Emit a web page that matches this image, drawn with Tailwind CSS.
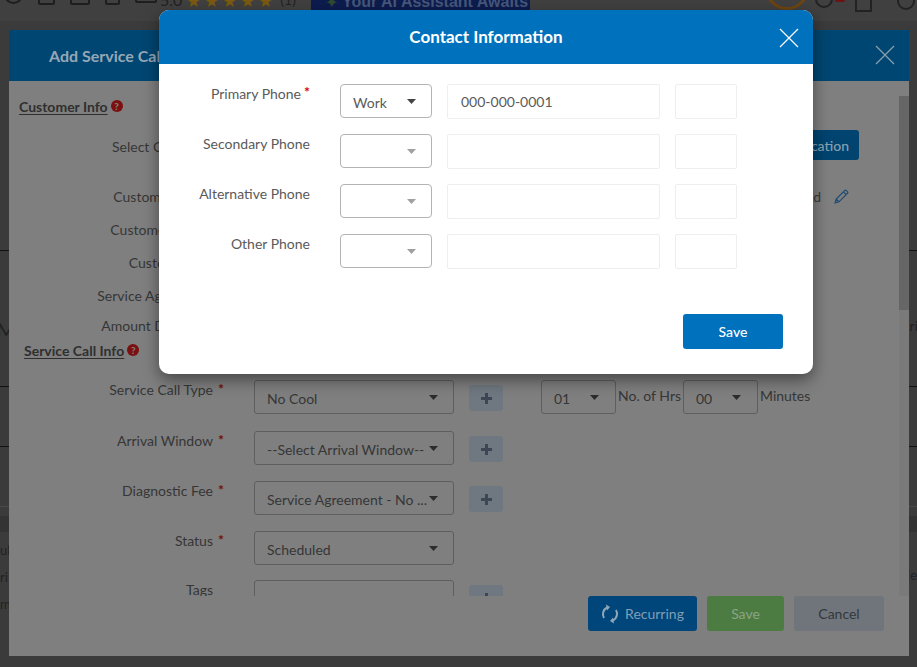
<!DOCTYPE html>
<html lang="en">
  <head>
    <meta charset="UTF-8" />
    <title>Add Service Call - Contact Information</title>
    <script src="https://cdn.jsdelivr.net/npm/@tailwindcss/browser@4"></script>
  </head>
  <body class="bg-[#3e3e3e] font-['Lato','Open_Sans',sans-serif] text-[14px] overflow-hidden">
    <div class="relative w-[917px] h-[667px] overflow-hidden">
      <!-- page behind the dialogs -->
      <div class="flex flex-col h-full text-[#222]">
        <div class="flex items-start h-[21px] bg-[#404040] overflow-hidden shrink-0">
          <div class="flex items-start gap-[15px] pl-[4px] w-[158px]">
            <div class="w-[19px] h-[20px] -mt-[16px] border-2 border-[#1e1e1e] rounded-full"></div>
            <div class="w-[17px] h-[20px] -mt-[15px] border-2 border-[#1e1e1e] rounded-[2px]"></div>
            <div class="w-[20px] h-[20px] -mt-[15px] border-2 border-[#1e1e1e] rounded-[2px]"></div>
            <div class="w-[15px] h-[20px] -mt-[15px] border-2 border-[#1e1e1e] rounded-[2px]"></div>
            <div class="w-[22px] h-[20px] -mt-[17px] border-2 border-[#1e1e1e] rounded-[2px]"></div>
          </div>
          <span class="ml-[2px] -mt-[10px] text-[16px] leading-[20px] text-[#222]">5.0</span>
          <span class="ml-[4px] -mt-[9px] text-[17px] leading-[20px] tracking-[3px] text-[#7a5a10]">★★★★★</span>
          <span class="ml-[4px] -mt-[10px] text-[14px] leading-[20px] text-[#222]">(1)</span>
          <div class="flex items-start ml-[15px] w-[219px] h-[10px] bg-[#0c1c4e] overflow-hidden">
            <span class="ml-[14px] -mt-[8px] text-[16px] leading-[20px] text-[#2f4a2f]">✦</span>
            <span class="ml-[4px] -mt-[8px] font-['Liberation_Sans',sans-serif] font-bold text-[16px] leading-[20px] text-[#46577a] whitespace-nowrap">Your AI Assistant Awaits</span>
          </div>
          <div class="ml-[235px] -mt-[34px] w-[44px] h-[44px] shrink-0 rounded-full border-[3px] border-[#6e4410]"></div>
          <div class="ml-[6px] -mt-[10px] w-[18px] h-[18px] shrink-0 border-2 border-[#222] rounded-full"></div>
          <div class="ml-[2px] -mt-[2px] w-[10px] h-[4px] shrink-0 rounded-full bg-[#6a1414]"></div>
          <div class="ml-[10px] -mt-[8px] w-[17px] h-[20px] shrink-0 border-2 border-[#222]"></div>
          <div class="ml-[25px] -mt-[10px] w-[18px] h-[20px] shrink-0 border-2 border-[#222] rounded-full"></div>
        </div>
        <div class="flex-1 flex flex-col bg-[#3b3b3b]">
          <div class="h-[230px] border-b border-[#111] shrink-0"></div>
          <div class="flex justify-between h-[136px] border-b border-[#111] shrink-0">
            <span class="mt-[66px] -ml-[4px] text-[22px] leading-[26px]">M</span>
            <span class="mt-[66px] text-[14px] leading-[18px] -mr-[1px] pr-0">ri</span>
          </div>
          <div class="h-[60px] border-b border-[#111] shrink-0"></div>
          <div class="h-[60px] border-b border-[#4a4a4a] shrink-0"></div>
          <div class="h-[9px] shrink-0"></div>
          <div class="h-[16px] bg-[#333] shrink-0"></div>
          <div class="flex justify-between">
            <div class="flex flex-col gap-[9px] mt-[9px] text-[13px] leading-[18px]">
              <span class="w-[9px]">ul</span>
              <span class="w-[9px]">ri</span>
              <span class="w-[9px]">m</span>
            </div>
            <span class="mt-[34px] text-[13px] leading-[18px]">le</span>
          </div>
        </div>
      </div>

      <!-- Add Service Call dialog, dimmed by the one on top -->
      <div class="absolute left-[9px] top-[30px] w-[900px] h-[626px] bg-[#7f7f7f] flex flex-col">
        <div class="relative flex items-center h-[51px] pl-[40px] bg-[#004672] shrink-0">
          <h2 class="text-[16px] font-bold text-[#96a7b5]">Add Service Call</h2>
          <svg class="absolute right-[14px] top-[15px] w-[20px] h-[20px]" viewBox="0 0 20 20" fill="none" stroke="#8aa0ae" stroke-width="1.2"><path d="M1 1 19 19M19 1 1 19" /></svg>
        </div>
        <div class="flex mt-[15px] h-[500px] shrink-0">
          <div class="relative flex-1 overflow-hidden text-[#363636]">
            <div class="flex items-center gap-[3px] pl-[10px] h-[20px] font-bold text-[#2f2f2f]">
              <span class="underline underline-offset-2">Customer Info</span>
              <span class="flex items-center justify-center w-[12px] h-[12px] rounded-full bg-[#7c0f0f] text-[10px] leading-none font-black text-[#7f7f7f]">?</span>
            </div>
            <div class="flex mt-[20px] h-[20px] items-center">
              <span class="w-[204px] text-right">Select Customer</span>
              <div class="flex flex-1 justify-end pr-[40px]">
                <span class="relative -top-[1px] flex items-center justify-end w-[180px] h-[30px] pr-[10px] rounded-[3px] bg-[#00446f] text-[#8aa0ae] font-medium">Add New Location</span>
              </div>
            </div>
            <div class="flex mt-[30px] h-[20px] items-center">
              <span class="w-[204px] text-right">Customer Name</span>
              <div class="flex flex-1 items-center justify-end pr-[50px] gap-[13px]">
                <span class="text-[#3a3a3a]">Oak Rd</span>
                <svg class="w-[15px] h-[15px]" viewBox="0 0 15 15" fill="none" stroke="#1c4a70" stroke-width="1.2"><path d="M1.2 13.8 2.2 10 10.6 1.6a1.3 1.3 0 0 1 1.8 0l1 1a1.3 1.3 0 0 1 0 1.8L5 12.8ZM2.2 10 5 12.8M9.4 2.8l2.8 2.8" /></svg>
              </div>
            </div>
            <div class="flex mt-[13px] h-[20px] items-center"><span class="w-[204px] text-right">Customer Phone</span></div>
            <div class="flex mt-[13px] h-[20px] items-center"><span class="w-[204px] text-right">Customer Fax</span></div>
            <div class="flex mt-[13px] h-[20px] items-center"><span class="w-[204px] text-right">Service Agreement</span></div>
            <div class="flex mt-[10px] h-[20px] items-center"><span class="w-[204px] text-right">Amount Due Now</span></div>
            <div class="flex items-center gap-[3px] pl-[15px] mt-[5px] h-[20px] font-bold text-[#2f2f2f]">
              <span class="underline underline-offset-2">Service Call Info</span>
              <span class="flex items-center justify-center w-[12px] h-[12px] rounded-full bg-[#7c0f0f] text-[10px] leading-none font-black text-[#7f7f7f]">?</span>
            </div>
            <div class="flex items-start mt-[20px] h-[34px]">
              <span class="w-[204px] text-right leading-[20px]">Service Call Type</span>
              <span class="w-[41px] pl-[5px] text-[#6d0f0f] font-bold leading-[18px]">*</span>
              <div class="flex items-center justify-between w-[200px] h-[34px] px-[12px] border border-[#5e5e5e] rounded-[3px]">
                <span class="pt-[2px]">No Cool</span>
                <svg class="w-[9px] h-[5px] mr-[3px]" viewBox="0 0 9 5" fill="#2c2c2c"><path d="M0 0h9L4.5 5Z" /></svg>
              </div>
              <div class="flex items-center justify-center w-[34px] h-[26px] ml-[15px] mt-[5px] rounded-[3px] bg-[#6f7880]">
                <svg class="w-[11px] h-[11px]" viewBox="0 0 11 11" fill="#3c4753"><path d="M4 0h3v4h4v3H7v4H4V7H0V4h4Z" /></svg>
              </div>
              <div class="flex items-center justify-between w-[75px] h-[34px] ml-[38px] pl-[12px] pr-[16px] border border-[#5e5e5e] rounded-[3px]">
                <span class="pt-[2px]">01</span>
                <svg class="w-[9px] h-[5px]" viewBox="0 0 9 5" fill="#2c2c2c"><path d="M0 0h9L4.5 5Z" /></svg>
              </div>
              <span class="w-[67px] pl-[2px] leading-[32px] whitespace-nowrap">No. of Hrs</span>
              <div class="flex items-center justify-between w-[75px] h-[34px] pl-[12px] pr-[16px] border border-[#5e5e5e] rounded-[3px]">
                <span class="pt-[2px]">00</span>
                <svg class="w-[9px] h-[5px]" viewBox="0 0 9 5" fill="#2c2c2c"><path d="M0 0h9L4.5 5Z" /></svg>
              </div>
              <span class="pl-[2px] leading-[32px]">Minutes</span>
            </div>
            <div class="flex items-start mt-[17px] h-[34px]">
              <span class="w-[204px] text-right leading-[20px]">Arrival Window</span>
              <span class="w-[41px] pl-[5px] text-[#6d0f0f] font-bold leading-[18px]">*</span>
              <div class="flex items-center justify-between w-[200px] h-[34px] px-[12px] border border-[#5e5e5e] rounded-[3px]">
                <span class="pt-[2px] whitespace-nowrap">--Select Arrival Window--</span>
                <svg class="w-[9px] h-[5px] mr-[3px]" viewBox="0 0 9 5" fill="#2c2c2c"><path d="M0 0h9L4.5 5Z" /></svg>
              </div>
              <div class="flex items-center justify-center w-[34px] h-[26px] ml-[15px] mt-[5px] rounded-[3px] bg-[#6f7880]">
                <svg class="w-[11px] h-[11px]" viewBox="0 0 11 11" fill="#3c4753"><path d="M4 0h3v4h4v3H7v4H4V7H0V4h4Z" /></svg>
              </div>
            </div>
            <div class="flex items-start mt-[16px] h-[34px]">
              <span class="w-[204px] text-right leading-[20px]">Diagnostic Fee</span>
              <span class="w-[41px] pl-[5px] text-[#6d0f0f] font-bold leading-[18px]">*</span>
              <div class="flex items-center justify-between w-[200px] h-[34px] px-[12px] border border-[#5e5e5e] rounded-[3px]">
                <span class="pt-[2px] whitespace-nowrap">Service Agreement - No ...</span>
                <svg class="w-[9px] h-[5px] mr-[3px] shrink-0" viewBox="0 0 9 5" fill="#2c2c2c"><path d="M0 0h9L4.5 5Z" /></svg>
              </div>
              <div class="flex items-center justify-center w-[34px] h-[26px] ml-[15px] mt-[5px] rounded-[3px] bg-[#6f7880]">
                <svg class="w-[11px] h-[11px]" viewBox="0 0 11 11" fill="#3c4753"><path d="M4 0h3v4h4v3H7v4H4V7H0V4h4Z" /></svg>
              </div>
            </div>
            <div class="flex items-start mt-[16px] h-[34px]">
              <span class="w-[204px] text-right leading-[20px]">Status</span>
              <span class="w-[41px] pl-[5px] text-[#6d0f0f] font-bold leading-[18px]">*</span>
              <div class="flex items-center justify-between w-[200px] h-[34px] px-[12px] border border-[#5e5e5e] rounded-[3px]">
                <span class="pt-[2px]">Scheduled</span>
                <svg class="w-[9px] h-[5px] mr-[3px]" viewBox="0 0 9 5" fill="#2c2c2c"><path d="M0 0h9L4.5 5Z" /></svg>
              </div>
            </div>
            <div class="flex items-start mt-[15px] h-[34px]">
              <span class="w-[204px] text-right leading-[20px]">Tags</span>
              <span class="w-[41px]"></span>
              <div class="w-[200px] h-[34px] border border-[#5e5e5e] rounded-[3px]"></div>
              <div class="flex items-center justify-center w-[34px] h-[26px] ml-[15px] mt-[5px] rounded-[3px] bg-[#6f7880]">
                <svg class="w-[11px] h-[11px]" viewBox="0 0 11 11" fill="#3c4753"><path d="M4 0h3v4h4v3H7v4H4V7H0V4h4Z" /></svg>
              </div>
            </div>
          </div>
          <div class="w-[10px] h-full bg-[#7a7a7a] shrink-0">
            <div class="h-[214px] bg-[#666666]"></div>
          </div>
        </div>
        <div class="flex justify-end gap-[10px] pr-[25px]">
          <button class="flex items-center justify-center gap-[6px] w-[109px] h-[35px] rounded-[3px] bg-[#00467a] text-[#7f9fb5]">
            <svg class="w-[18px] h-[20px]" viewBox="0 0 18 20" fill="none" stroke="#8fa7b8" stroke-width="2"><path d="M3 14A7.5 7.5 0 0 1 6 3.5M15 6a7.5 7.5 0 0 1-3 10.500" /><path d="M5 0.500 9 3 6 6.500" fill="#8fa7b8" stroke="none" /><path d="M13 19.500 9 17l3-3.500" fill="#8fa7b8" stroke="none" /></svg>
            Recurring
          </button>
          <button class="w-[77px] h-[35px] rounded-[3px] bg-[#4d7c43] text-[#8aa486]">Save</button>
          <button class="w-[90px] h-[35px] rounded-[3px] bg-[#6f757b] text-[#33383d]">Cancel</button>
        </div>
      </div>

      <!-- Contact Information dialog -->
      <div class="absolute left-[159px] top-[10px] w-[654px] h-[364px] rounded-[10px] bg-white shadow-[0_6px_16px_rgba(0,0,0,0.45)] overflow-hidden">
        <div class="relative flex items-center justify-center h-[54px] bg-[#0071bc]">
          <h2 class="text-[17px] font-bold text-white">Contact Information</h2>
          <svg class="absolute right-[14px] top-[18px] w-[20px] h-[20px]" viewBox="0 0 20 20" fill="none" stroke="#fff" stroke-width="1.200"><path d="M1 1 19 19M19 1 1 19" /></svg>
        </div>
        <div class="flex flex-col gap-[15px] pt-[20px] text-[#5a5a5a]">
          <div class="flex items-start h-[35px]">
            <span class="w-[142px] text-right leading-[20px]">Primary Phone</span>
            <span class="w-[39px] pl-[3px] text-[#d0021b] font-bold leading-[16px]">*</span>
            <div class="flex items-center justify-between w-[92px] h-[34px] pl-[12px] pr-[15px] border border-[#b3b3b3] rounded-[4px]">
              <span class="pt-[2px]">Work</span>
              <svg class="w-[9px] h-[5px]" viewBox="0 0 9 5" fill="#444"><path d="M0 0h9L4.5 5Z" /></svg>
            </div>
            <div class="flex items-center w-[213px] h-[35px] ml-[15px] px-[13px] border border-[#eeeeee] rounded-[2px]">000-000-0001</div>
            <div class="w-[62px] h-[35px] ml-[15px] border border-[#eeeeee] rounded-[2px]"></div>
          </div>
          <div class="flex items-start h-[35px]">
            <span class="w-[151px] text-right leading-[20px]">Secondary Phone</span>
            <span class="w-[30px]"></span>
            <div class="flex items-center justify-end w-[92px] h-[34px] pr-[15px] border border-[#b3b3b3] rounded-[4px]">
              <svg class="w-[9px] h-[5px]" viewBox="0 0 9 5" fill="#a0a0a0"><path d="M0 0h9L4.5 5Z" /></svg>
            </div>
            <div class="w-[213px] h-[35px] ml-[15px] border border-[#eeeeee] rounded-[2px]"></div>
            <div class="w-[62px] h-[35px] ml-[15px] border border-[#eeeeee] rounded-[2px]"></div>
          </div>
          <div class="flex items-start h-[35px]">
            <span class="w-[151px] text-right leading-[20px]">Alternative Phone</span>
            <span class="w-[30px]"></span>
            <div class="flex items-center justify-end w-[92px] h-[34px] pr-[15px] border border-[#b3b3b3] rounded-[4px]">
              <svg class="w-[9px] h-[5px]" viewBox="0 0 9 5" fill="#a0a0a0"><path d="M0 0h9L4.5 5Z" /></svg>
            </div>
            <div class="w-[213px] h-[35px] ml-[15px] border border-[#eeeeee] rounded-[2px]"></div>
            <div class="w-[62px] h-[35px] ml-[15px] border border-[#eeeeee] rounded-[2px]"></div>
          </div>
          <div class="flex items-start h-[35px]">
            <span class="w-[151px] text-right leading-[20px]">Other Phone</span>
            <span class="w-[30px]"></span>
            <div class="flex items-center justify-end w-[92px] h-[34px] pr-[15px] border border-[#b3b3b3] rounded-[4px]">
              <svg class="w-[9px] h-[5px]" viewBox="0 0 9 5" fill="#a0a0a0"><path d="M0 0h9L4.5 5Z" /></svg>
            </div>
            <div class="w-[213px] h-[35px] ml-[15px] border border-[#eeeeee] rounded-[2px]"></div>
            <div class="w-[62px] h-[35px] ml-[15px] border border-[#eeeeee] rounded-[2px]"></div>
          </div>
        </div>
        <div class="flex justify-end pr-[30px] pt-[45px]">
          <button class="w-[100px] h-[35px] rounded-[3px] bg-[#0071bc] text-white font-medium">Save</button>
        </div>
      </div>
    </div>
  </body>
</html>
